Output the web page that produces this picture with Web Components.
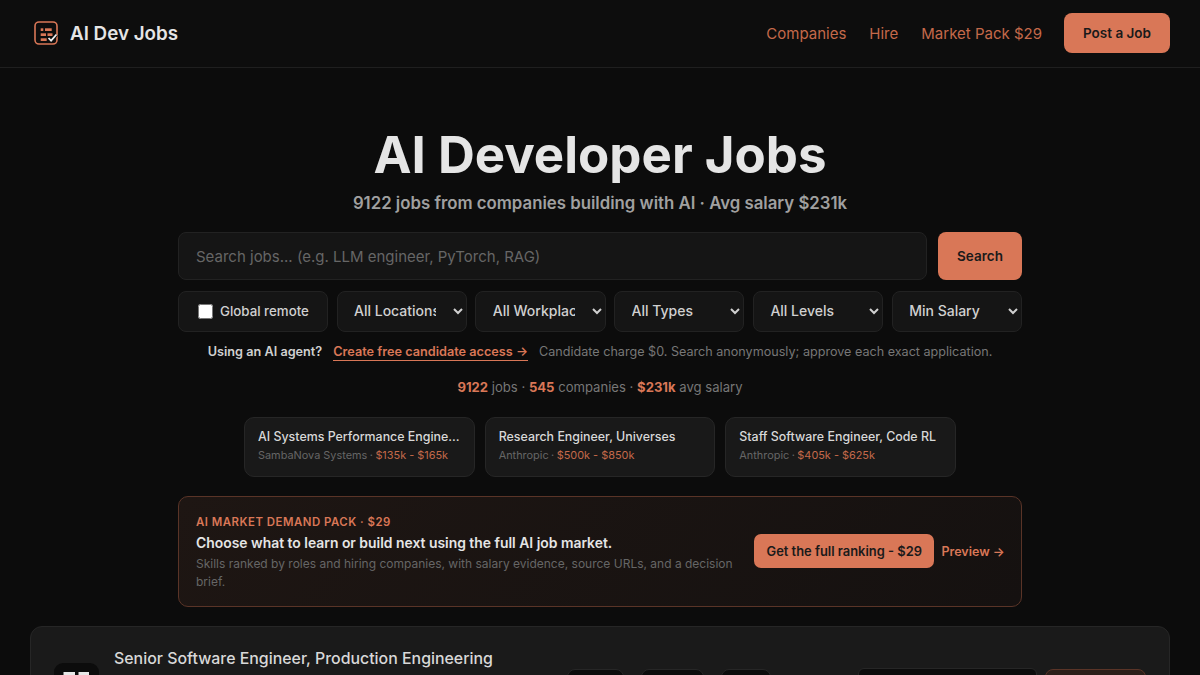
<!DOCTYPE html>
<html lang="en">
<head>
<meta charset="utf-8">
<title>AI Dev Jobs</title>
<style>
    html, body { margin: 0; height: 675px; overflow: hidden; background: #0c0c0c; }
    body { font-family: Inter, "Liberation Sans", sans-serif; color: #e5e5e5; color-scheme: dark; }
</style>
</head>
<body>
<site-nav></site-nav>
<hero-section></hero-section>
<search-panel></search-panel>
<agent-line></agent-line>
<stats-line></stats-line>
<div style="display:flex;justify-content:center;gap:10px;margin-top:21px">
    <featured-job title-text="AI Systems Performance Engineer, Compilers" company="SambaNova Systems" salary="$135k - $165k"></featured-job>
    <featured-job title-text="Research Engineer, Universes" company="Anthropic" salary="$500k - $850k"></featured-job>
    <featured-job title-text="Staff Software Engineer, Code RL" company="Anthropic" salary="$405k - $625k"></featured-job>
</div>
<market-pack></market-pack>
<job-card title-text="Senior Software Engineer, Production Engineering"></job-card>

<script>
class SiteNav extends HTMLElement {
    constructor() {
        super();
        this.attachShadow({ mode: 'open' });
        this.shadowRoot.innerHTML = `
            <style>
                :host { display: flex; box-sizing: border-box; height: 68px; align-items: center; justify-content: space-between; padding: 0 30px 1px 34px; border-bottom: 1px solid #1f1f1f; background: #0d0d0d; }
                .brand { display: flex; align-items: center; gap: 12px; font-size: 18.800px; font-weight: 600; color: #e5e5e5; }
                svg { display: block; }
                .links { display: flex; align-items: center; }
                a { color: #c4694a; font-size: 15px; text-decoration: none; margin-right: 23px; }
                .post { margin: 0 0 0 -1px; display: flex; align-items: center; justify-content: center; width: 106px; height: 40px; box-sizing: border-box; background: #d97757; color: #1a1a1a; font-size: 13.500px; font-weight: 600; border-radius: 8px; }
            </style>
            <div class="brand">
                <svg width="24" height="24" viewBox="0 0 24 24" fill="none">
                    <rect x="1" y="1" width="22" height="22" rx="4" stroke="#d97757" stroke-width="1.600"/>
                    <g fill="#d97757">
                        <rect x="6.700" y="7.300" width="2.600" height="2.700"/>
                        <rect x="11" y="7.300" width="6.700" height="2.700"/>
                        <rect x="6.700" y="12.300" width="5.300" height="2.700"/>
                        <rect x="13.500" y="12.300" width="5" height="2.700"/>
                        <rect x="6.700" y="17.300" width="6" height="2.700"/>
                    </g>
                    <path d="M14.500 17l2.600 2.700 5.400-6.200" stroke="#0d0d0d" stroke-width="3.600"/>
                    <path d="M14.500 17l2.600 2.700 5.400-6.200" stroke="#eeeeee" stroke-width="1.800"/>
                </svg>
                <span>AI Dev Jobs</span>
            </div>
            <div class="links">
                <a href="#">Companies</a>
                <a href="#">Hire</a>
                <a href="#">Market Pack $29</a>
                <a href="#" class="post">Post a Job</a>
            </div>
        `;
    }
}

class HeroSection extends HTMLElement {
    constructor() {
        super();
        this.attachShadow({ mode: 'open' });
        this.shadowRoot.innerHTML = `
            <style>
                :host { display: block; text-align: center; padding-top: 55px; }
                h1 { margin: 0; font-size: 51px; line-height: 63px; font-weight: 700; color: #e5e5e5; }
                p { margin: 3px 0 0; font-size: 16.800px; line-height: 28px; font-weight: 600; color: #a0a0a0; }
            </style>
            <h1>AI Developer Jobs</h1>
            <p>9122 jobs from companies building with AI · Avg salary $231k</p>
        `;
    }
}

class SearchPanel extends HTMLElement {
    constructor() {
        super();
        this.attachShadow({ mode: 'open' });
        const selects = ['All Locations', 'All Workplaces', 'All Types', 'All Levels', 'Min Salary']
            .map(label => `<select><option>${label}</option></select>`).join('');
        this.shadowRoot.innerHTML = `
            <style>
                :host { display: block; width: 844px; margin: 15px auto 0; font-family: Inter, "Liberation Sans", sans-serif; color-scheme: dark; }
                .search { display: flex; gap: 11px; }
                input[type="text"] { flex: 1; min-width: 0; height: 48px; box-sizing: border-box; padding: 0 17px; background: #151515; border: 1px solid #222; border-radius: 8px; color: #e5e5e5; font: 400 15px Inter, sans-serif; outline: none; }
                input[type="text"]::placeholder { color: #666; opacity: 1; }
                button { width: 84px; height: 48px; background: #d97757; border: none; border-radius: 8px; color: #1a1a1a; font: 600 13.500px Inter, sans-serif; }
                .filters { display: flex; gap: 8.500px; margin-top: 11px; }
                label, select { height: 41px; box-sizing: border-box; background: #151515; border: 1px solid #222; border-radius: 8px; color: #d0d0d0; font: 500 14px Inter, sans-serif; }
                label { width: 150px; flex: none; display: flex; align-items: center; gap: 7px; padding: 0 0 0 19px; font-size: 13.300px; }
                label input { width: 15px; height: 15px; margin: 0; color-scheme: light; }
                select { flex: 1; min-width: 0; width: 130px; padding: 0 14px 2px 12.500px; outline: none; }
            </style>
            <div class="search">
                <input type="text" placeholder="Search jobs... (e.g. LLM engineer, PyTorch, RAG)">
                <button>Search</button>
            </div>
            <div class="filters">
                <label><input type="checkbox"><span style="margin-top:-2px">Global remote</span></label>
                ${selects}
            </div>
        `;
    }
}

class AgentLine extends HTMLElement {
    constructor() {
        super();
        this.attachShadow({ mode: 'open' });
        this.shadowRoot.innerHTML = `
            <style>
                :host { display: flex; justify-content: center; align-items: baseline; gap: 11px; margin-top: 12px; font-size: 12.700px; line-height: 16px; color: #777; }
                b { font-weight: 600; color: #d0d0d0; }
                a { font-weight: 600; color: #d97757; text-decoration: none; border-bottom: 1px solid #d97757; }
                span { font-size: 12.600px; }
            </style>
            <b>Using an AI agent?</b>
            <a href="#">Create free candidate access →</a>
            <span>Candidate charge $0. Search anonymously; approve each exact application.</span>
        `;
    }
}

class StatsLine extends HTMLElement {
    constructor() {
        super();
        this.attachShadow({ mode: 'open' });
        this.shadowRoot.innerHTML = `
            <style>
                :host { display: block; text-align: center; margin-top: 17px; font-size: 13.100px; line-height: 18px; color: #777; }
                b { font-weight: 700; color: #d97757; }
            </style>
            <b>9122</b> jobs · <b>545</b> companies · <b>$231k</b> avg salary
        `;
    }
}

class FeaturedJob extends HTMLElement {
    constructor() {
        super();
        this.attachShadow({ mode: 'open' });
        this.shadowRoot.innerHTML = `
            <style>
                :host { display: block; width: 230.670px; height: 60px; box-sizing: border-box; padding: 11px 12px 11px 13px; background: #191919; border: 1px solid #262626; border-radius: 10px; }
                .title { font-size: 12.400px; line-height: 16px; font-weight: 500; color: #d8d8d8; white-space: nowrap; overflow: hidden; text-overflow: ellipsis; }
                .meta { margin-top: 2px; font-size: 10.900px; line-height: 16px; color: #666; white-space: nowrap; }
                .dot { margin: 0 -.6px; }
                .salary { color: #c4694a; }
            </style>
            <div class="title">${this.getAttribute('title-text')}</div>
            <div class="meta">${this.getAttribute('company')} <span class="dot">·</span> <span class="salary">${this.getAttribute('salary')}</span></div>
        `;
    }
}

class MarketPack extends HTMLElement {
    constructor() {
        super();
        this.attachShadow({ mode: 'open' });
        this.shadowRoot.innerHTML = `
            <style>
                :host { display: flex; align-items: center; box-sizing: border-box; width: 844px; height: 111px; margin: 19px auto 0; padding: 0 17px; background: linear-gradient(135deg, #1e1613, #151110); border: 1px solid #5a3427; border-radius: 10px; }
                .copy { width: 558px; flex: none; padding-top: 1px; }
                .kicker { font-size: 11.400px; line-height: 16px; font-weight: 600; letter-spacing: .5px; color: #d97757; }
                .head { margin-top: 3px; font-size: 13.900px; line-height: 20px; font-weight: 600; color: #e5e5e5; }
                .desc { margin-top: 2.500px; font-size: 12px; line-height: 17.500px; color: #666; }
                a { text-decoration: none; margin-bottom: 1px; }
                .buy { display: block; height: 34px; line-height: 35px; padding: 0 12.500px; background: #d97757; color: #1a1a1a; font-size: 12.900px; font-weight: 600; border-radius: 7px; white-space: nowrap; }
                .preview { margin-left: 7px; color: #d97757; font-size: 12.500px; font-weight: 600; white-space: nowrap; }
            </style>
            <div class="copy">
                <div class="kicker">AI MARKET DEMAND PACK · $29</div>
                <div class="head">Choose what to learn or build next using the full AI job market.</div>
                <div class="desc">Skills ranked by roles and hiring companies, with salary evidence, source URLs, and a decision brief.</div>
            </div>
            <a href="#" class="buy">Get the full ranking - $29</a>
            <a href="#" class="preview">Preview →</a>
        `;
    }
}

class JobCard extends HTMLElement {
    constructor() {
        super();
        this.attachShadow({ mode: 'open' });
        this.shadowRoot.innerHTML = `
            <style>
                :host { display: flex; box-sizing: border-box; width: 1140px; height: 120px; margin: 19px auto 0; padding: 21px 23px; background: #1a1a1a; border: 1px solid #262626; border-radius: 12px; }
                .logo { flex: none; width: 45px; height: 45px; margin-top: 15px; background: #0c0c0c; border-radius: 9px; }
                .logo svg { display: block; }
                .title { flex: none; width: 453px; margin: 1px 0 0 15px; font-size: 15.900px; line-height: 20px; font-weight: 500; color: #d8d8d8; white-space: nowrap; }
                .chips { display: flex; gap: 17px; flex: none; margin-top: 21px; }
                .chips i { display: block; height: 30px; background: #0c0c0c; border: 1px solid #262626; border-radius: 8px; box-sizing: border-box; }
                .box { flex: none; width: 179px; height: 40px; margin: 20px 0 0 87px; background: #0c0c0c; border: 1px solid #262626; border-radius: 6px; box-sizing: border-box; }
                .cta { flex: none; width: 101px; height: 40px; margin: 21px 0 0 8px; background: #2c1f1a; border: 1px solid #5a3427; border-radius: 8px; box-sizing: border-box; }
            </style>
            <div class="logo">
                <svg width="45" height="45" viewBox="0 0 45 45"><path d="M9.500 9H21v11H9.500zM24.500 9H35v11H24.500z" fill="#e8e8e8"/></svg>
            </div>
            <div class="title">${this.getAttribute('title-text')}</div>
            <div class="chips"><i style="width:57px"></i><i style="width:63px"></i><i style="width:50px"></i></div>
            <div class="box"></div>
            <div class="cta"></div>
        `;
    }
}

customElements.define('site-nav', SiteNav);
customElements.define('hero-section', HeroSection);
customElements.define('search-panel', SearchPanel);
customElements.define('agent-line', AgentLine);
customElements.define('stats-line', StatsLine);
customElements.define('featured-job', FeaturedJob);
customElements.define('market-pack', MarketPack);
customElements.define('job-card', JobCard);
</script>
</body>
</html>
